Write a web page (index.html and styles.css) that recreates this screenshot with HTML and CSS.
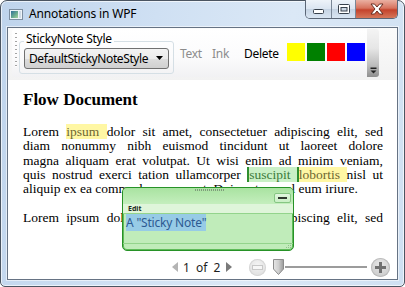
FILE: index.html
```html
<!DOCTYPE html>
<html>
<head>
<meta charset="utf-8">
<title>Annotations in WPF</title>
<link rel="stylesheet" href="styles.css">
</head>
<body>
<div class="window">
  <div class="titlebar">
    <svg class="appicon" width="14" height="11" viewBox="0 0 14 11">
      <defs>
        <linearGradient id="ag" x1="0" y1="0" x2="1" y2="1">
          <stop offset="0" stop-color="#2f6f9a"/>
          <stop offset="0.6" stop-color="#6fae8f"/>
          <stop offset="1" stop-color="#a7d3a0"/>
        </linearGradient>
      </defs>
      <rect x="0.5" y="0.5" width="13" height="10" fill="#eef3f8" stroke="#7d8ea0"/>
      <rect x="2" y="2" width="7" height="7" fill="url(#ag)"/>
      <rect x="10" y="2" width="2" height="7" fill="#cfdbe6"/>
    </svg>
    <div class="title">Annotations in WPF</div>
    <div class="caps">
      <div class="cap min">
        <svg width="11" height="5" viewBox="0 0 11 5"><rect x="0.5" y="0.5" width="10" height="4" rx="1" fill="#fff" stroke="#38414c"/></svg>
      </div>
      <div class="cap max">
        <svg width="12" height="10" viewBox="0 0 12 10"><rect x="0.5" y="0.5" width="11" height="9" rx="1" fill="#fff" stroke="#38414c"/><rect x="3" y="3.5" width="6" height="3.5" fill="#cdd8e4" stroke="#38414c"/></svg>
      </div>
      <div class="cap close">
        <svg width="16" height="12" viewBox="0 0 16 12"><path d="M2 1 L5.5 1 L8 4 L10.5 1 L14 1 L10 6 L14 11 L10.5 11 L8 8 L5.5 11 L2 11 L6 6 Z" fill="#fff" stroke="#5a2418" stroke-width="0.9" stroke-linejoin="round"/></svg>
      </div>
    </div>
  </div>
  <div class="client">
    <div class="tray">
      <div class="toolbar">
        <div class="grip"></div>
        <fieldset class="group">
          <legend>StickyNote Style</legend>
          <div class="combo">
            <span>DefaultStickyNoteStyle</span>
            <svg class="arrow" width="7" height="4" viewBox="0 0 7 4"><path d="M0 0 H7 L3.5 4 Z" fill="#000"/></svg>
          </div>
        </fieldset>
        <span class="tb dis t-text">Text</span>
        <span class="tb dis t-ink">Ink</span>
        <span class="tb t-del">Delete</span>
        <div class="swatches">
          <i class="sw yellow"></i><i class="sw green"></i><i class="sw red"></i><i class="sw blue"></i>
        </div>
        <div class="overflow">
          <svg width="7" height="7" viewBox="0 0 7 7"><rect x="0.5" y="0.5" width="6" height="1.5" fill="#222"/><path d="M0.5 3.5 H6.5 L3.5 6.5 Z" fill="#222"/></svg>
        </div>
      </div>
    </div>
    <div class="doc">
      <h1>Flow Document</h1>
      <p class="para">
        <span class="ln">Lorem <span class="hl">ipsum </span>dolor sit amet, consectetuer adipiscing elit, sed</span>
        <span class="ln">diam nonummy nibh euismod tincidunt ut laoreet dolore</span>
        <span class="ln">magna aliquam erat volutpat. Ut wisi enim ad minim veniam,</span>
        <span class="ln">quis nostrud exerci tation ullamcorper <span class="gh">suscipit </span><span class="hl">lobortis </span>nisl ut</span>
        <span class="ln last">aliquip ex ea commodo consequat. Duis autem vel eum iriure.</span>
      </p>
      <p class="para">
        <span class="ln">Lorem ipsum dolor sit amet, consectetuer adipiscing elit, sed</span>
      </p>
      <div class="note">
        <div class="note-head">
          <div class="note-grip"></div>
          <div class="note-min"><i></i></div>
        </div>
        <div class="note-menu">Edit</div>
        <div class="note-body"><span class="sel">A "Sticky Note"</span></div>
        <div class="note-foot">
          <svg width="7" height="7" viewBox="0 0 7 7" fill="#8fbf8a"><rect x="5" y="0" width="1" height="1"/><rect x="3" y="2" width="1" height="1"/><rect x="5" y="2" width="1" height="1"/><rect x="1" y="4" width="1" height="1"/><rect x="3" y="4" width="1" height="1"/><rect x="5" y="4" width="1" height="1"/></svg>
        </div>
      </div>
    </div>
    <div class="status">
      <svg class="prev" width="6" height="10" viewBox="0 0 6 10"><path d="M6 0 V10 L0 5 Z" fill="#b4b4b4"/></svg>
      <span class="pages">1 of 2</span>
      <svg class="next" width="6" height="10" viewBox="0 0 6 10"><path d="M0 0 V10 L6 5 Z" fill="#7a7a7a"/></svg>
      <div class="zoombtn minus"><i class="bar"></i></div>
      <div class="slider">
        <svg class="thumb" width="13" height="16" viewBox="0 0 13 16">
          <defs><linearGradient id="tg" x1="0" y1="0" x2="1" y2="0"><stop offset="0" stop-color="#e6e6e6"/><stop offset="0.5" stop-color="#cfcfcf"/><stop offset="1" stop-color="#9a9a9a"/></linearGradient></defs>
          <path d="M1.5 0.5 H11.5 V10 L6.5 15.5 L1.5 10 Z" fill="url(#tg)" stroke="#8c8c8c"/>
        </svg>
        <div class="track"></div>
      </div>
      <div class="zoombtn plus"><i class="bar"></i><i class="bar v"></i></div>
    </div>
  </div>
</div>
</body>
</html>
```

FILE: styles.css
```css
html, body {
  margin: 0;
  padding: 0;
}
body {
  width: 405px;
  height: 287px;
  overflow: hidden;
  background: #ffffff;
  font-family: "Segoe UI", "Noto Sans", sans-serif;
}
.window {
  box-sizing: border-box;
  width: 405px;
  height: 287px;
  border: 1px solid #4b5562;
  border-radius: 7px 7px 5px 5px;
  background: linear-gradient(100deg, #bfd4ec 0%, #cfe0f3 35%, #dbe8f6 65%, #cfe0f2 100%);
  box-shadow: inset 0 0 0 1px rgba(255, 255, 255, 0.65);
  display: flex;
  flex-direction: column;
  padding: 0 6px 6px 6px;
}
.titlebar {
  height: 26px;
  display: flex;
  align-items: flex-start;
  flex: none;
}
.appicon {
  margin: 8px 0 0 2px;
  flex: none;
}
.title {
  margin: 5px 0 0 6px;
  font-size: 12px;
  line-height: 16px;
  letter-spacing: -0.15px;
  color: #000;
}
.caps {
  margin-left: auto;
  margin-top: -1px;
  display: flex;
  height: 19px;
  border: 1px solid #5b6676;
  border-top: none;
  border-radius: 0 0 5px 5px;
  overflow: hidden;
  box-sizing: border-box;
}
.cap {
  display: flex;
  align-items: center;
  justify-content: center;
  box-sizing: border-box;
  height: 100%;
}
.cap.min, .cap.max {
  background: linear-gradient(#eef3f9 0%, #dbe5f1 48%, #c5d3e3 52%, #d9e5f2 100%);
  border-right: 1px solid #7a8797;
}
.cap.min { width: 26px; align-items: flex-end; padding-bottom: 4px; }
.cap.max { width: 24px; }
.cap.close {
  width: 41px;
  background: linear-gradient(#eab0a2 0%, #d7735e 45%, #c4432c 55%, #d6775a 100%);
}
.client {
  flex: 1;
  display: flex;
  flex-direction: column;
  background: #ffffff;
  border: 1px solid #667384;
  box-shadow: 0 0 0 1px rgba(255, 255, 255, 0.55);
  overflow: hidden;
  min-height: 0;
}
.tray {
  flex: none;
  height: 52px;
  box-sizing: border-box;
  padding: 1px 0 0 4px;
  background: linear-gradient(#fbfbfb, #f2f2f2);
}
.toolbar {
  width: 367px;
  height: 48px;
  box-sizing: border-box;
  padding-left: 3px;
  display: flex;
  align-items: center;
  border-radius: 3px;
  background: linear-gradient(#ffffff 0%, #fbfbfc 60%, #f1f1f3 100%);
}
.grip {
  width: 2px;
  height: 36px;
  margin-bottom: 4px;
  flex: none;
  background: repeating-linear-gradient(to bottom, #a3a3a3 0 1px, #ffffff 1px 2px, transparent 2px 4px);
}
.group {
  margin: 0 0 0 2px;
  padding: 0 4px 4px 4px;
  width: 155px;
  box-sizing: border-box;
  border: 1px solid #d5dfe5;
  border-radius: 3px;
  flex: none;
}
.group legend {
  padding: 0 2px 5px 2px;
  margin-left: 0;
  font-size: 12px;
  line-height: 12px;
  letter-spacing: -0.25px;
  color: #000;
}
.combo {
  height: 21px;
  margin-top: -2px;
  box-sizing: border-box;
  border: 1px solid #707070;
  border-radius: 3px;
  background: linear-gradient(#f3f3f3 0%, #ebebeb 50%, #dddddd 51%, #d0d0d0 100%);
  display: flex;
  align-items: center;
  padding-left: 4px;
  font-size: 12px;
  letter-spacing: -0.4px;
  color: #000;
  white-space: nowrap;
}
.combo .arrow {
  margin-left: auto;
  margin-right: 5px;
  flex: none;
}
.tb {
  font-size: 12px;
  letter-spacing: -0.3px;
  color: #000;
  flex: none;
}
.tb.dis { color: #8c8c8c; }
.t-text { margin-left: 6px; width: 32px; }
.t-ink { width: 32px; }
.t-del { width: 43px; }
.swatches {
  display: flex;
  gap: 2px;
  margin-bottom: 2px;
  flex: none;
}
.sw {
  display: block;
  width: 18px;
  height: 18px;
}
.sw.yellow { background: #ffff00; }
.sw.green { background: #008000; }
.sw.red { background: #ff0000; }
.sw.blue { background: #0000ff; }
.overflow {
  margin-left: 2px;
  width: 12px;
  align-self: stretch;
  box-sizing: border-box;
  border-radius: 0 3px 3px 0;
  background: linear-gradient(#f4f4f4 0%, #e6e6e6 40%, #bdbdbd 75%, #8f8f8f 100%);
  display: flex;
  align-items: flex-end;
  justify-content: center;
  padding-bottom: 3px;
  flex: none;
}
.doc {
  flex: 1;
  position: relative;
  padding: 10px 14px 0 15px;
  min-height: 0;
  font-family: "Liberation Serif", "Times New Roman", serif;
  color: #000;
}
.doc h1 {
  margin: 0;
  font-size: 17px;
  line-height: 20px;
  font-weight: bold;
}
.para {
  margin: 15px 0 0 0;
  font-size: 13.5px;
  line-height: 14.3px;
}
.para + .para { margin-top: 14.5px; }
.ln {
  display: block;
  text-align: justify;
  text-align-last: justify;
  white-space: nowrap;
}
.ln.last { text-align-last: left; }
.hl {
  background: #fff7a4;
  color: #6d6630;
}
.gh {
  background: #c9f0c6;
  color: #3b7a3b;
  border-left: 2px solid #2f8f2f;
  border-right: 2px solid #2f8f2f;
}
.note {
  position: absolute;
  left: 114px;
  top: 107px;
  width: 172px;
  height: 64px;
  box-sizing: border-box;
  border: 1px solid #279227;
  border-radius: 5px;
  background: #c0ecba;
  box-shadow: inset 0 0 0 1px #5fbb5a;
  display: flex;
  flex-direction: column;
  overflow: hidden;
  font-family: "Segoe UI", "Noto Sans", sans-serif;
}
.note-head {
  height: 15px;
  flex: none;
  position: relative;
  display: flex;
  align-items: flex-end;
  justify-content: flex-end;
  padding: 0 2px 1px 0;
  background: linear-gradient(#a9e3a1, #c4eebd);
}
.note-grip {
  position: absolute;
  left: 72px;
  top: 1px;
  width: 30px;
  height: 2px;
  background: repeating-linear-gradient(to right, #7f9c7c 0 1px, transparent 1px 2px);
}
.note-min {
  width: 17px;
  height: 10px;
  box-sizing: border-box;
  border: 1px solid #86c683;
  border-radius: 2px;
  background: linear-gradient(#e2f7df, #c9efc4);
  display: flex;
  align-items: center;
  justify-content: center;
}
.note-min i {
  display: block;
  width: 9px;
  height: 2px;
  background: #2f3a2f;
}
.note-menu {
  height: 9px;
  flex: none;
  padding-left: 5px;
  font-size: 7px;
  line-height: 9px;
  font-weight: bold;
  color: #1d2a1d;
  background: #dff5da;
  border-bottom: 1px solid #93d48c;
}
.note-body {
  flex: 1;
  padding: 3px 0 0 3px;
  font-size: 12px;
  line-height: 12px;
  letter-spacing: -0.2px;
  border-bottom: 1px solid #93d48c;
}
.sel {
  background: #97cbe6;
  color: #2d5a92;
}
.note-foot {
  height: 6px;
  flex: none;
  display: flex;
  justify-content: flex-end;
  align-items: flex-end;
  padding-right: 1px;
}
.status {
  flex: none;
  height: 24px;
  display: flex;
  align-items: center;
  padding-left: 164px;
  font-size: 12px;
  color: #1e1e1e;
}
.prev, .next { flex: none; }
.pages {
  margin: 0 6px 0 5px;
  word-spacing: 3px;
  white-space: nowrap;
}
.zoombtn {
  width: 17px;
  height: 17px;
  border-radius: 50%;
  position: relative;
  flex: none;
  display: flex;
  align-items: center;
  justify-content: center;
}
.zoombtn.minus {
  margin-left: 17px;
  background: radial-gradient(circle at 50% 35%, #f4f4f4, #dadada);
  box-shadow: inset 0 0 0 1px #d6d6d6;
}
.zoombtn.minus .bar {
  display: block;
  width: 9px;
  height: 3px;
  background: #f7f7f7;
  box-shadow: 0 0 0 1px #c8c8c8;
}
.zoombtn.plus {
  margin-left: 4px;
  width: 19px;
  height: 19px;
  background: radial-gradient(circle at 50% 35%, #e8e8e8, #c4c4c4);
  box-shadow: inset 0 0 0 1px #bbbbbb;
}
.zoombtn.plus .bar {
  position: absolute;
  display: block;
  width: 11px;
  height: 3px;
  background: #707070;
}
.zoombtn.plus .bar.v {
  width: 3px;
  height: 11px;
}
.slider {
  margin-left: 6px;
  width: 95px;
  display: flex;
  align-items: center;
  flex: none;
}
.thumb { flex: none; }
.track {
  flex: 1;
  height: 2px;
  background: #9c9c9c;
}
```
